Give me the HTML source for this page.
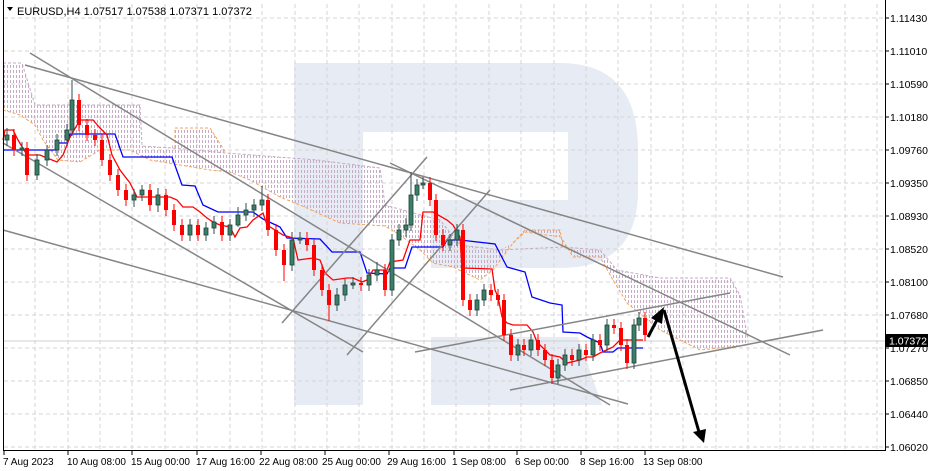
<!DOCTYPE html>
<html><head><meta charset="utf-8"><style>
html,body{margin:0;padding:0;background:#fff;}
body{width:931px;height:471px;overflow:hidden;position:relative;font-family:"Liberation Sans",sans-serif;}
svg{position:absolute;left:0;top:0;}
</style></head><body>
<svg width="931" height="471" viewBox="0 0 931 471" xmlns="http://www.w3.org/2000/svg">
<defs>
<pattern id="cl" width="3" height="5" patternUnits="userSpaceOnUse"><rect x="1" y="0" width="1" height="3" fill="#c6aac6"/></pattern>
</defs>
<path d="M294 63 H560 Q638 63 638 150 V190 Q638 268 560 268 H431 V200 H568 V132 H363 V405 H294 Z M431 337 H578 L602 405 H431 Z" fill="#e7ebf3"/>
<g stroke="#d6d6d6" stroke-dasharray="4,3" stroke-width="1">
<path d="M4 18H885M4 51H885M4 84H885M4 117H885M4 150H885M4 183H885M4 216H885M4 249H885M4 282H885M4 315H885M4 348H885M4 381H885M4 414H885M4 447H885"/>
<path d="M35 4V450M68 4V450M100 4V450M132 4V450M165 4V450M197 4V450M230 4V450M262 4V450M295 4V450M327 4V450M359 4V450M392 4V450M424 4V450M456 4V450M489 4V450M521 4V450M554 4V450M586 4V450M618 4V450M651 4V450M683 4V450M716 4V450M748 4V450M780 4V450M813 4V450M845 4V450M877 4V450"/>
</g>
<line x1="4" y1="341" x2="885" y2="341" stroke="#d0d0d0" stroke-width="1"/>
<polygon points="3,63 22,63 35,105 140,105 142,146 172,148 175,128 210,128 226,153 317,160 380,168 385,205 410,212 440,220 460,245 500,250 513,243 525,230 560,230 563,247 600,250 617,270 660,278 730,278 740,295 748,340 748,345 700,350 690,345 660,330 627,303 613,280 600,257 573,257 561,237 525,232 513,243 493,270 480,280 453,267 433,263 420,250 400,235 385,226 340,223 300,205 280,197 250,180 230,172 210,170 180,165 150,160 130,150 100,150 80,162 58,160 43,140 35,125 20,115 3,110" fill="url(#cl)"/>
<polyline points="3,63 22,63 35,105 140,105 142,146 172,148 226,153 317,160 380,168 385,205 410,212 440,220 460,245 500,250 563,247 600,250 617,270 660,278 730,278 740,295 748,340" fill="none" stroke="#c6aac6" stroke-dasharray="3,2"/>
<polyline points="3,110 20,115 35,125 43,140 58,160 80,162 100,150 130,150 150,160 180,165 210,170 230,172 250,180 280,197 300,205 340,223 385,226 400,235 420,250 433,263 453,267 480,280 493,270 513,243 525,232 561,237 573,257 600,257 613,280 627,303 660,330 690,345 700,350 748,345" fill="none" stroke="#f4a460" stroke-dasharray="3,2"/>
<polyline points="175,148 175,128 210,128 226,153" fill="none" stroke="#f4a460" stroke-dasharray="3,2"/>
<polyline points="513,243 525,230 560,230 563,247" fill="none" stroke="#f4a460" stroke-dasharray="3,2"/>
<polyline points="3,150 57,150 58,143 67,143 70,134 115,134 123,157 172,157 182,185 195,186 203,205 218,212 253,212 263,219 280,227 287,238 320,239 332,252 360,252 367,273 387,274 390,268 405,268 412,247 443,247 447,240 460,240 495,244 507,267 525,272 532,297 550,303 562,305 563,332 580,333 587,337 600,343 603,352 613,352 618,348 643,348" fill="none" stroke="#0000ff" stroke-width="1.3"/>
<polyline points="3,140 5,130 13,130 18,140 27,155 40,155 47,158 57,162 63,155 70,137 80,120 93,120 100,128 107,135 112,155 120,170 130,183 137,197 170,197 177,200 183,207 193,207 200,212 207,218 213,222 220,225 230,227 235,237 240,228 247,227 253,220 263,213 267,225 283,235 293,238 298,260 313,258 320,260 325,273 333,280 347,278 353,278 362,282 367,280 373,270 387,270 390,262 403,260 410,240 420,240 423,212 433,212 447,220 453,225 460,237 462,268 492,269 495,290 498,297 502,317 507,323 513,325 527,325 533,332 537,342 543,348 550,355 560,357 567,363 580,360 587,357 593,357 600,353 613,347 620,340 627,340 643,340" fill="none" stroke="#ff0000" stroke-width="1.3"/>
<g stroke="#858585" stroke-width="1.5" fill="none">
<line x1="25" y1="65" x2="783" y2="277"/>
<line x1="30" y1="53" x2="610" y2="405"/>
<line x1="3" y1="143" x2="363" y2="352"/>
<line x1="3" y1="230" x2="628" y2="404"/>
<line x1="390" y1="163" x2="790" y2="355"/>
<line x1="282" y1="323" x2="427" y2="157"/>
<line x1="347" y1="355" x2="490" y2="190"/>
<line x1="415" y1="352" x2="730" y2="293"/>
<line x1="510" y1="390" x2="823" y2="330"/>
</g>
<path stroke="#2f4f4f" stroke-width="1" d="M7 128V146M22 142V156M37 154V180M47 145V166M57 134V156M67 124V146M72 80V136M134 189V207M142 185V201M158 188V212M190 219V241M206 222V241M214 216V234M230 219V241M238 207V227M246 203V221M254 199V217M262 186V211M292 232V271M300 232V244M337 288V311M345 279V301M353 277V289M369 269V291M377 262V281M392 234V296M399 224V246M406 218V237M411 172V231M417 179V201M423 177V189M450 234V251M457 224V246M477 294V316M484 284V306M518 339V361M531 334V356M558 359V384M565 349V371M579 344V366M593 334V361M607 319V351M634 319V369M639 312V331"/>
<path stroke="#ff0000" stroke-width="1" d="M14 129V156M27 142V181M79 94V131M87 119V141M95 129V146M102 134V166M110 154V181M118 169V196M126 184V206M150 184V211M166 189V216M174 204V231M182 219V241M198 219V241M222 216V241M268 194V236M276 224V256M284 244V281M307 232V251M314 239V276M322 264V296M329 284V321M361 277V291M385 264V296M430 177V206M436 194V241M443 229V251M463 224V306M470 294V316M491 284V301M498 289V306M504 294V341M511 329V361M524 339V356M538 334V356M545 344V366M552 354V384M572 349V366M586 344V361M600 334V351M614 319V334M621 322V351M627 339V369M645 312V341"/>
<g fill="#3b7f68" stroke="#1f3f35" stroke-width="0.8">
<rect x="5" y="135" width="4" height="5"/><rect x="20" y="148" width="4" height="2"/><rect x="35" y="160" width="4" height="15"/><rect x="45" y="150" width="4" height="10"/><rect x="55" y="140" width="4" height="10"/><rect x="65" y="130" width="4" height="10"/><rect x="70" y="100" width="4" height="30"/><rect x="132" y="195" width="4" height="5"/><rect x="140" y="190" width="4" height="5"/><rect x="156" y="195" width="4" height="10"/><rect x="188" y="225" width="4" height="10"/><rect x="204" y="228" width="4" height="7"/><rect x="212" y="222" width="4" height="6"/><rect x="228" y="225" width="4" height="10"/><rect x="236" y="215" width="4" height="10"/><rect x="244" y="210" width="4" height="5"/><rect x="252" y="205" width="4" height="5"/><rect x="260" y="200" width="4" height="5"/><rect x="290" y="240" width="4" height="25"/><rect x="298" y="238" width="4" height="2"/><rect x="335" y="295" width="4" height="10"/><rect x="343" y="285" width="4" height="10"/><rect x="351" y="283" width="4" height="2"/><rect x="367" y="275" width="4" height="10"/><rect x="375" y="270" width="4" height="5"/><rect x="390" y="240" width="4" height="50"/><rect x="397" y="230" width="4" height="10"/><rect x="404" y="225" width="4" height="5"/><rect x="409" y="195" width="4" height="30"/><rect x="415" y="185" width="4" height="10"/><rect x="421" y="183" width="4" height="2"/><rect x="448" y="240" width="4" height="5"/><rect x="455" y="230" width="4" height="10"/><rect x="475" y="300" width="4" height="10"/><rect x="482" y="290" width="4" height="10"/><rect x="516" y="345" width="4" height="10"/><rect x="529" y="340" width="4" height="10"/><rect x="556" y="365" width="4" height="13"/><rect x="563" y="355" width="4" height="10"/><rect x="577" y="350" width="4" height="10"/><rect x="591" y="340" width="4" height="15"/><rect x="605" y="325" width="4" height="20"/><rect x="632" y="325" width="4" height="38"/><rect x="637" y="318" width="4" height="7"/>
</g>
<g fill="#ff0000">
<rect x="12" y="135" width="4" height="15"/><rect x="25" y="148" width="4" height="27"/><rect x="77" y="100" width="4" height="25"/><rect x="85" y="125" width="4" height="10"/><rect x="93" y="135" width="4" height="5"/><rect x="100" y="140" width="4" height="20"/><rect x="108" y="160" width="4" height="15"/><rect x="116" y="175" width="4" height="15"/><rect x="124" y="190" width="4" height="10"/><rect x="148" y="190" width="4" height="15"/><rect x="164" y="195" width="4" height="15"/><rect x="172" y="210" width="4" height="15"/><rect x="180" y="225" width="4" height="10"/><rect x="196" y="225" width="4" height="10"/><rect x="220" y="222" width="4" height="13"/><rect x="266" y="200" width="4" height="30"/><rect x="274" y="230" width="4" height="20"/><rect x="282" y="250" width="4" height="15"/><rect x="305" y="238" width="4" height="7"/><rect x="312" y="245" width="4" height="25"/><rect x="320" y="270" width="4" height="20"/><rect x="327" y="290" width="4" height="15"/><rect x="359" y="283" width="4" height="2"/><rect x="383" y="270" width="4" height="20"/><rect x="428" y="183" width="4" height="17"/><rect x="434" y="200" width="4" height="35"/><rect x="441" y="235" width="4" height="10"/><rect x="461" y="230" width="4" height="70"/><rect x="468" y="300" width="4" height="10"/><rect x="489" y="290" width="4" height="5"/><rect x="496" y="295" width="4" height="5"/><rect x="502" y="300" width="4" height="35"/><rect x="509" y="335" width="4" height="20"/><rect x="522" y="345" width="4" height="5"/><rect x="536" y="340" width="4" height="10"/><rect x="543" y="350" width="4" height="10"/><rect x="550" y="360" width="4" height="18"/><rect x="570" y="355" width="4" height="5"/><rect x="584" y="350" width="4" height="5"/><rect x="598" y="340" width="4" height="5"/><rect x="612" y="325" width="4" height="3"/><rect x="619" y="328" width="4" height="17"/><rect x="625" y="345" width="4" height="18"/><rect x="643" y="318" width="4" height="17"/>
</g>
<line x1="648" y1="337" x2="658" y2="318" stroke="#000" stroke-width="3"/>
<polygon points="664,307 651,318 662,324" fill="#000"/>
<line x1="664" y1="310" x2="699" y2="432" stroke="#000" stroke-width="3"/>
<polygon points="704,443 693,432 706,429" fill="#000"/>
<path d="M3.5 0V450.5H885.5V0" fill="none" stroke="#000" stroke-width="1"/>
<path stroke="#000" d="M885 18H889M885 51H889M885 84H889M885 117H889M885 150H889M885 183H889M885 216H889M885 249H889M885 282H889M885 315H889M885 348H889M885 381H889M885 414H889M885 447H889"/>
<path stroke="#000" d="M4 451V455M68 451V455M132 451V455M197 451V455M261 451V455M325 451V455M389 451V455M454 451V455M517 451V455M581 451V455M645 451V455"/>
<g font-size="10.5" fill="#000" font-family="Liberation Sans, sans-serif">
<text x="890" y="22">1.11430</text><text x="890" y="55">1.11010</text><text x="890" y="88">1.10590</text><text x="890" y="121">1.10180</text><text x="890" y="154">1.09760</text><text x="890" y="187">1.09350</text><text x="890" y="220">1.08930</text><text x="890" y="253">1.08520</text><text x="890" y="286">1.08100</text><text x="890" y="319">1.07680</text><text x="890" y="352">1.07270</text><text x="890" y="385">1.06850</text><text x="890" y="418">1.06440</text><text x="890" y="451">1.06020</text>
</g>
<rect x="886" y="334" width="42" height="13" fill="#000"/>
<text x="889" y="344.5" font-size="10.5" fill="#fff">1.07372</text>
<g font-size="10" fill="#000">
<text x="3" y="465">7 Aug 2023</text><text x="67" y="465">10 Aug 08:00</text><text x="131" y="465">15 Aug 00:00</text><text x="196" y="465">17 Aug 16:00</text><text x="259" y="465">22 Aug 08:00</text><text x="322" y="465">25 Aug 00:00</text><text x="387" y="465">29 Aug 16:00</text><text x="452" y="465">1 Sep 08:00</text><text x="515" y="465">6 Sep 00:00</text><text x="580" y="465">8 Sep 16:00</text><text x="643" y="465">13 Sep 08:00</text>
</g>
<polygon points="7,7 13,7 10,11" fill="#000"/>
<text x="17" y="15" font-size="11" fill="#000">EURUSD,H4  1.07517 1.07538 1.07371 1.07372</text>
</svg>
</body></html>
